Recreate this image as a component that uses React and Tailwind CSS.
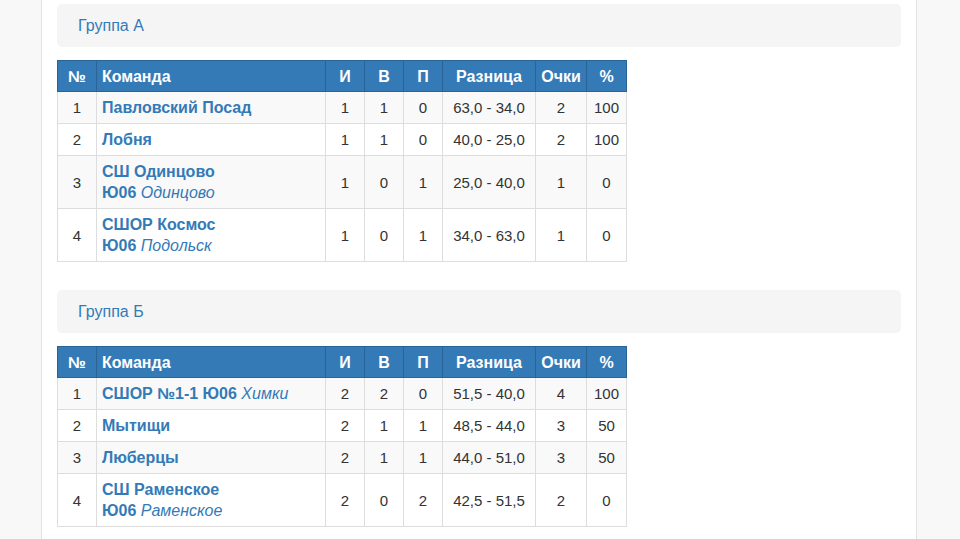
const groups = [
  {
    title: "Группа А",
    rows: [
      { n: 1, team: "Павловский Посад", i: 1, w: 1, l: 0, diff: "63,0 - 34,0", pts: 2, pct: 100 },
      { n: 2, team: "Лобня", i: 1, w: 1, l: 0, diff: "40,0 - 25,0", pts: 2, pct: 100 },
      { n: 3, team: "СШ Одинцово", sub: "Ю06", city: "Одинцово", i: 1, w: 0, l: 1, diff: "25,0 - 40,0", pts: 1, pct: 0 },
      { n: 4, team: "СШОР Космос", sub: "Ю06", city: "Подольск", i: 1, w: 0, l: 1, diff: "34,0 - 63,0", pts: 1, pct: 0 },
    ],
  },
  {
    title: "Группа Б",
    rows: [
      { n: 1, team: "СШОР №1-1 Ю06", city: "Химки", inline: true, i: 2, w: 2, l: 0, diff: "51,5 - 40,0", pts: 4, pct: 100 },
      { n: 2, team: "Мытищи", i: 2, w: 1, l: 1, diff: "48,5 - 44,0", pts: 3, pct: 50 },
      { n: 3, team: "Люберцы", i: 2, w: 1, l: 1, diff: "44,0 - 51,0", pts: 3, pct: 50 },
      { n: 4, team: "СШ Раменское", sub: "Ю06", city: "Раменское", i: 2, w: 0, l: 2, diff: "42,5 - 51,5", pts: 2, pct: 0 },
    ],
  },
];

const th = "border border-[#2a6496] bg-[#337ab7] text-white text-[16px] font-bold pt-[5px] pb-[4px] leading-[21px] text-center";
const td = "border border-[#dddddd] py-[5px] leading-[21px] text-center";

const TeamCell = ({ r }) => (
  <td className="border border-[#dddddd] py-[5px] px-[5px] leading-[21px] text-left text-[16px] text-[#337ab7] font-semibold whitespace-nowrap">
    {r.inline ? (
      <>
        {r.team} <span className="italic font-normal">{r.city}</span>
      </>
    ) : r.sub ? (
      <>
        <div>{r.team}</div>
        <div>
          {r.sub} <span className="italic font-normal">{r.city}</span>
        </div>
      </>
    ) : (
      r.team
    )}
  </td>
);

const Group = ({ g, first }) => (
  <div className={first ? "" : "mt-[28px]"}>
    <div className="h-[43px] rounded-[5px] bg-[#f5f5f5] flex items-center pl-[21px] text-[#337ab7] text-[16px]">
      {g.title}
    </div>
    <table className="mt-[13px] table-fixed border-collapse w-[569px] text-[15px] text-[#333]">
      <colgroup>
        <col className="w-[39px]" />
        <col className="w-[229px]" />
        <col className="w-[39px]" />
        <col className="w-[39px]" />
        <col className="w-[39px]" />
        <col className="w-[93px]" />
        <col className="w-[51px]" />
        <col className="w-[40px]" />
      </colgroup>
      <thead>
        <tr>
          <th className={th}>№</th>
          <th className={th + " !text-left px-[5px]"}>Команда</th>
          <th className={th}>И</th>
          <th className={th}>В</th>
          <th className={th}>П</th>
          <th className={th}>Разница</th>
          <th className={th}>Очки</th>
          <th className={th}>%</th>
        </tr>
      </thead>
      <tbody>
        {g.rows.map((r, idx) => (
          <tr key={r.n} className={idx % 2 === 0 ? "bg-[#f9f9f9]" : "bg-white"}>
            <td className={td}>{r.n}</td>
            <TeamCell r={r} />
            <td className={td}>{r.i}</td>
            <td className={td}>{r.w}</td>
            <td className={td}>{r.l}</td>
            <td className={td}>{r.diff}</td>
            <td className={td}>{r.pts}</td>
            <td className={td}>{r.pct}</td>
          </tr>
        ))}
      </tbody>
    </table>
  </div>
);

export default function App() {
  return (
    <div className="flex w-[960px] h-[539px] overflow-hidden bg-white" style={{ fontFamily: '"Liberation Sans", Arial, sans-serif' }}>
      <div className="w-[42px] shrink-0 bg-[#f8f8f8] border-r border-[#e2e2e2]" />
      <div className="w-[874px] shrink-0 px-[15px] pt-[4px]">
        {groups.map((g, i) => (
          <Group key={g.title} g={g} first={i === 0} />
        ))}
      </div>
      <div className="flex-1 bg-[#f8f8f8] border-l border-[#e2e2e2]" />
    </div>
  );
}
